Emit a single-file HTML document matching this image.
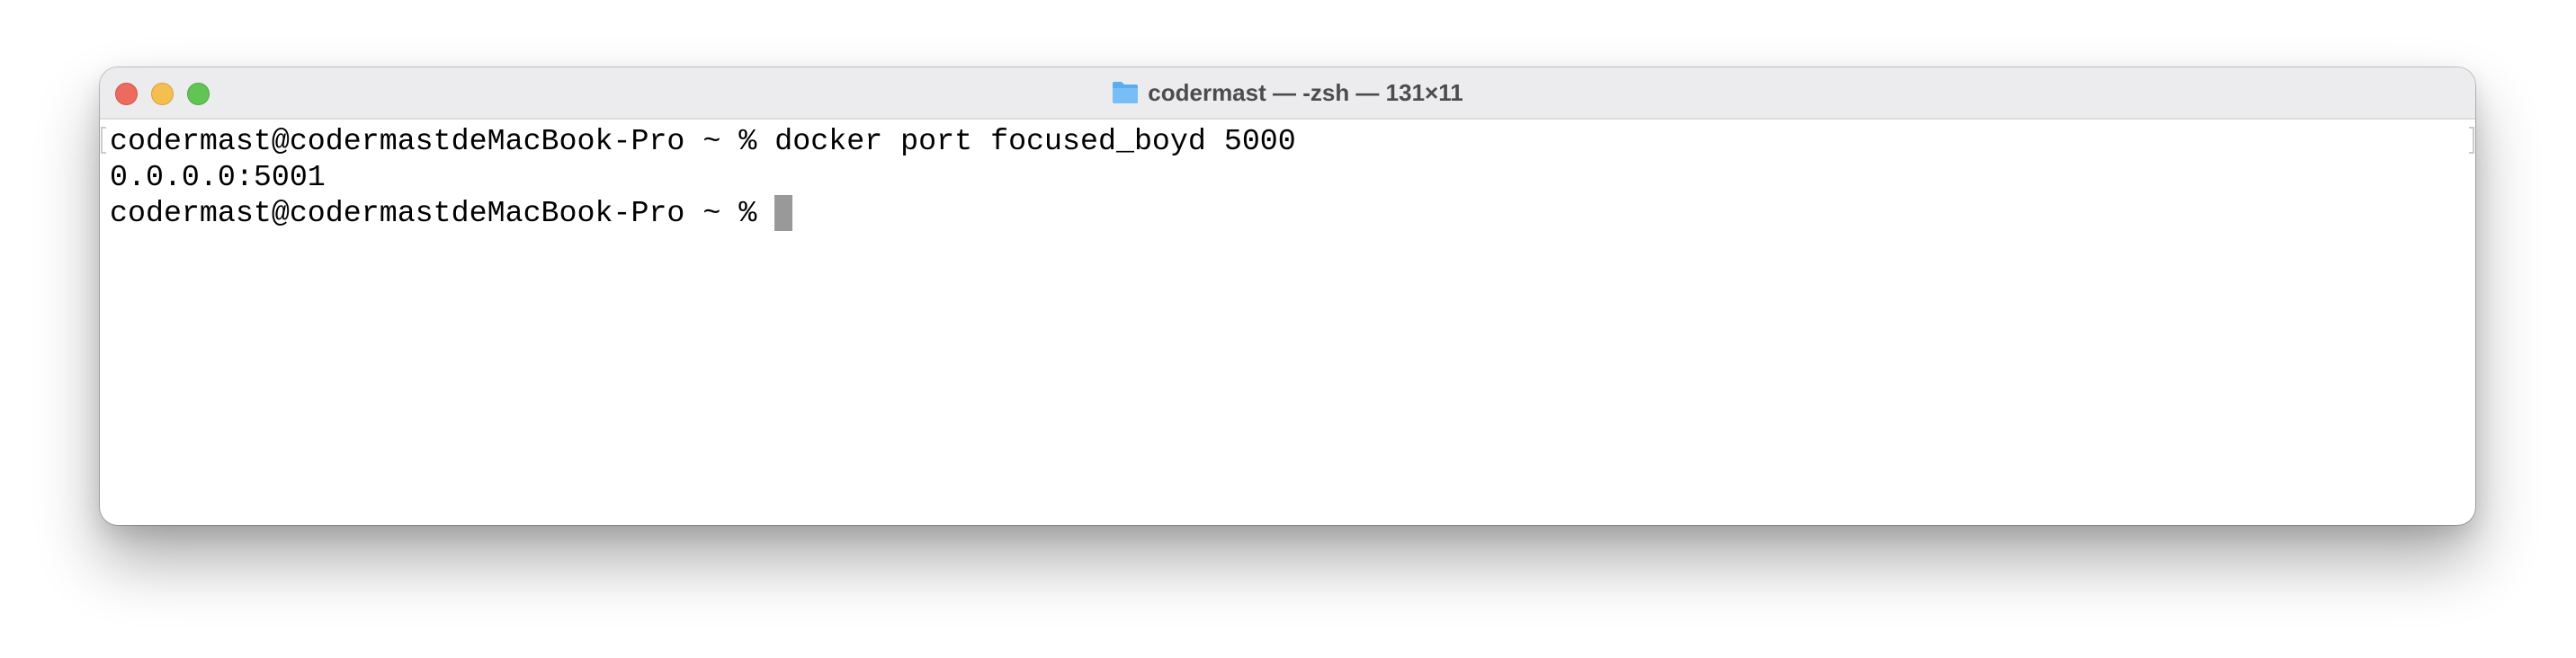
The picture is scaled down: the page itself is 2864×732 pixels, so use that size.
<!DOCTYPE html>
<html><head><style>
html,body{margin:0;padding:0;width:2864px;height:732px;background:#fff;overflow:hidden}
.win{position:absolute;left:111px;top:75px;width:2641px;height:509px;border-radius:20px;background:#fff;
box-shadow:0 0 0 1px rgba(0,0,0,.22),0 40px 70px rgba(0,0,0,.32),0 10px 25px rgba(0,0,0,.12);overflow:hidden}
.tb{position:absolute;left:0;top:0;right:0;height:56px;background:#ececee;border-bottom:2px solid #dcdcdc}
.dot{position:absolute;top:17px;width:23px;height:23px;border-radius:50%}
.title{position:absolute;left:0;right:0;top:0;height:56px;display:flex;align-items:center;justify-content:center;font:bold 26px "Liberation Sans",sans-serif;color:#4c4c4c}
.term{position:absolute;left:11px;top:62px;font:33.3px/40px "Liberation Mono",monospace;color:#000;white-space:pre}
.cur{display:inline-block;width:20px;height:40px;background:#999;vertical-align:top}
.br{position:absolute;top:66px;width:4px;height:26px;border:2px solid #ccc}
</style></head><body>
<div class="win">
 <div class="tb">
  <div class="dot" style="left:17px;background:#ec6a5e;border:0.5px solid #d15549"></div>
  <div class="dot" style="left:57px;background:#f4bf4f;border:0.5px solid #d6a13c"></div>
  <div class="dot" style="left:97px;background:#61c554;border:0.5px solid #4da941"></div>
  <div class="title"><svg width="30" height="26" viewBox="0 0 30 26" style="margin-right:10px;display:block"><path d="M1 3 Q1 1 3 1 H11 L14 4 H27 Q29 4 29 6 V23 Q29 25 27 25 H3 Q1 25 1 23Z" fill="#5aaef0"/><path d="M1 8 H29 V23 Q29 25 27 25 H3 Q1 25 1 23Z" fill="#78bdf5"/></svg><span>codermast — -zsh — 131×11</span></div>
 </div>
 <div class="br" style="left:1px;border-right:none"></div>
 <div class="br" style="right:1px;border-left:none"></div>
 <div class="term">codermast@codermastdeMacBook-Pro ~ % docker port focused_boyd 5000
0.0.0.0:5001
codermast@codermastdeMacBook-Pro ~ % <span class="cur"></span></div>
</div>
</body></html>
